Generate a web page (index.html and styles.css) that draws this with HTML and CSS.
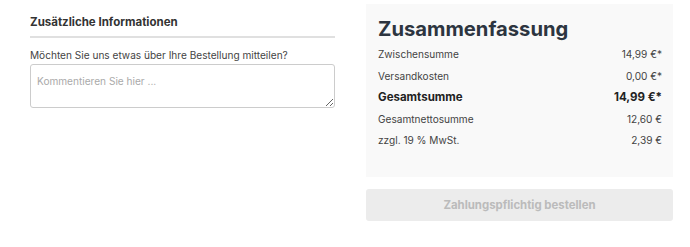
FILE: index.html
```html
<!DOCTYPE html>
<html lang="de">
<head>
    <meta charset="UTF-8">
    <meta name="viewport" content="width=device-width, initial-scale=1.0">
    <title>Kasse</title>
    <link rel="stylesheet" href="styles.css">
</head>
<body>
    <div class="checkout">
        <div class="info-col">
            <h3 class="info-title">Zusätzliche Informationen</h3>
            <label class="info-label" for="comment">Möchten Sie uns etwas über Ihre Bestellung mitteilen?</label>
            <textarea id="comment" class="info-text" placeholder="Kommentieren Sie hier ..."></textarea>
        </div>

        <div class="summary-col">
            <div class="summary">
                <h2 class="summary-title">Zusammenfassung</h2>
                <div class="row"><span>Zwischensumme</span><span>14,99 €*</span></div>
                <div class="row"><span>Versandkosten</span><span>0,00 €*</span></div>
                <div class="row total"><span>Gesamtsumme</span><span>14,99 €*</span></div>
                <div class="row"><span>Gesamtnettosumme</span><span>12,60 €</span></div>
                <div class="row"><span>zzgl. 19 % MwSt.</span><span>2,39 €</span></div>
            </div>
            <button class="order-btn" disabled>Zahlungspflichtig bestellen</button>
        </div>
    </div>
</body>
</html>
```

FILE: styles.css
```css
body {
    margin: 0;
    font-family: Inter, "Noto Sans", Arial, sans-serif;
    color: #333;
    background: #fff;
}
.checkout {
    display: flex;
    gap: 31px;
    padding: 4px 17px 0 30px;
}
.info-col {
    width: 305px;
    display: flex;
    flex-direction: column;
}
.info-title {
    margin: 0;
    padding: 11px 0 7px;
    font-size: 11.5px;
    line-height: 14px;
    font-weight: 700;
    color: #333;
    border-bottom: 2px solid #e0e0e0;
}
.info-label {
    margin-top: 10px;
    font-size: 10.1px;
    line-height: 14px;
    color: #444;
}
.info-text {
    margin-top: 2px;
    height: 44px;
    box-sizing: border-box;
    padding: 10px 6px;
    border: 1px solid #ccc;
    border-radius: 3px;
    font-family: Inter, "Noto Sans", Arial, sans-serif;
    font-size: 10.1px;
    resize: vertical;
}
.info-text::placeholder {
    color: #aaa;
}
.summary-col {
    width: 307px;
    display: flex;
    flex-direction: column;
    gap: 12px;
}
.summary {
    background: #f9f9f9;
    padding: 12.7px 11px 25px 12px;
}
.summary-title {
    margin: 0 0 3.5px;
    font-size: 20.2px;
    font-weight: 700;
    color: #2d3540;
    line-height: 24px;
}
.row {
    display: flex;
    justify-content: space-between;
    font-size: 10.1px;
    color: #444;
    line-height: 21.5px;
}
.row.total {
    font-size: 11.5px;
    font-weight: 700;
    color: #222;
}
.order-btn {
    height: 32px;
    border: none;
    border-radius: 3px;
    background: #ececec;
    color: #bbb;
    font-family: Inter, "Noto Sans", Arial, sans-serif;
    font-size: 11.4px;
    font-weight: 700;
}
```
